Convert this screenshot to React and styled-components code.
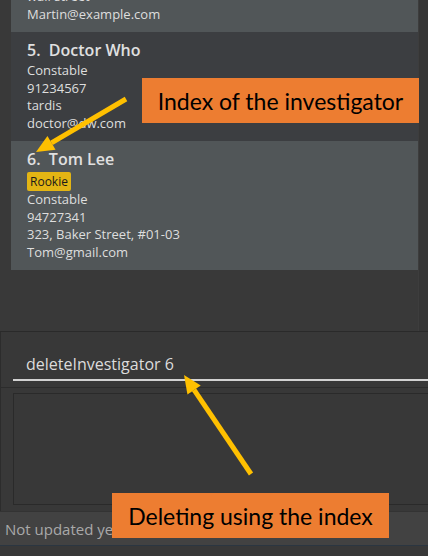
import React from 'react';
import styled, { createGlobalStyle } from 'styled-components';

const GlobalStyle = createGlobalStyle`
  html, body {
    margin: 0;
    padding: 0;
    background: #0b0b0c;
  }
  * {
    box-sizing: border-box;
  }
`;

const Window = styled.div`
  position: relative;
  width: 428px;
  height: 556px;
  overflow: hidden;
  display: flex;
  flex-direction: column;
  background: #383838;
  font-family: 'Open Sans', 'Noto Sans', sans-serif;
`;

const ListPanel = styled.div`
  height: 332px;
  flex: none;
  overflow: hidden;
  display: flex;
  background: #393939;
  border-bottom: 1px solid #2a2a2a;
`;

const ListBody = styled.div`
  flex: 1;
  padding-left: 11px;
`;

// list is scrolled down: the previous card is partly hidden above
const Cards = styled.div`
  margin-top: -77px;
  display: flex;
  flex-direction: column;
`;

const ScrollTrack = styled.div`
  width: 10px;
  flex: none;
  background: #353535;
  border-left: 1px solid #3d3d3d;
`;

const Card = styled.div`
  display: flex;
  flex-direction: column;
  align-items: flex-start;
  padding: 7px 16px 9px 16px;
  background: ${({ $odd }) => ($odd ? '#3c3e41' : '#515658')};
`;

const Title = styled.div`
  font-size: 16px;
  line-height: 23px;
  font-weight: 600;
  color: #e0e0e0;
  white-space: pre;
`;

const Tag = styled.span`
  margin-top: 1px;
  height: 19px;
  padding: 0 3px;
  border-radius: 2px;
  background: #e3b514;
  color: #1a1a1a;
  font-size: 12px;
  line-height: 19px;
`;

const Line = styled.div`
  font-size: 13px;
  line-height: 17.5px;
  color: #dedede;
`;

const CommandBox = styled.div`
  height: 56px;
  flex: none;
  padding: 14px 0 6px 12px;
  border-left: 1px solid #2c2c2c;
  border-bottom: 1px solid #2c2c2c;
  display: flex;
  flex-direction: column;
  justify-content: flex-end;
`;

const CommandText = styled.div`
  padding: 0 0 4px 13px;
  border-bottom: 2px solid #d2d2d2;
  font-size: 16px;
  line-height: 21px;
  color: #dcdcdc;
`;

const ResultPanel = styled.div`
  height: 123px;
  flex: none;
  padding: 5px 0 6px 12px;
  border-left: 1px solid #2c2c2c;
  display: flex;
`;

const ResultBox = styled.div`
  flex: 1;
  margin-right: -4px;
  border: 1px solid #2a2a2a;
  background: #383838;
`;

const StatusBar = styled.div`
  height: 35px;
  flex: none;
  padding-left: 5px;
  display: flex;
  align-items: center;
  background: #424242;
  border-top: 1px solid #333333;
  border-bottom: 1px solid #2b3641;
  color: #a9a9a9;
  font-size: 15px;
`;

const Callout = styled.div`
  position: absolute;
  left: ${({ $x }) => $x}px;
  top: ${({ $y }) => $y}px;
  width: 277px;
  height: 45px;
  display: flex;
  align-items: center;
  justify-content: center;
  background: #ed7d31;
  color: #000;
  font-family: Lato, 'Noto Sans', sans-serif;
  font-size: 23px;
`;

const Overlay = styled.svg`
  position: absolute;
  left: 0;
  top: 0;
  pointer-events: none;
`;

const investigators = [
  {
    id: 4,
    name: 'Martin Lim',
    details: ['Sergeant', '87438807', 'wall street', 'Martin@example.com'],
  },
  {
    id: 5,
    name: 'Doctor Who',
    details: ['Constable', '91234567', 'tardis', 'doctor@dw.com'],
  },
  {
    id: 6,
    name: 'Tom Lee',
    tags: ['Rookie'],
    details: ['Constable', '94727341', '323, Baker Street, #01-03', 'Tom@gmail.com'],
  },
];

const Arrow = ({ x1, y1, x2, y2 }) => {
  const ang = Math.atan2(y2 - y1, x2 - x1);
  const len = 18;
  const half = 8;
  const bx = x2 - len * Math.cos(ang);
  const by = y2 - len * Math.sin(ang);
  const px = -Math.sin(ang) * half;
  const py = Math.cos(ang) * half;
  return (
    <g>
      <line x1={x1} y1={y1} x2={bx} y2={by} stroke="#ffc000" strokeWidth="5" />
      <polygon
        points={`${x2},${y2} ${bx + px},${by + py} ${bx - px},${by - py}`}
        fill="#ffc000"
      />
    </g>
  );
};

export default function App() {
  return (
    <Window>
      <GlobalStyle />
      <ListPanel>
        <ListBody>
          <Cards>
            {investigators.map((p) => (
              <Card key={p.id} $odd={p.id % 2 === 1}>
                <Title>{`${p.id}.  ${p.name}`}</Title>
                {p.tags && p.tags.map((t) => <Tag key={t}>{t}</Tag>)}
                {p.details.map((d) => (
                  <Line key={d}>{d}</Line>
                ))}
              </Card>
            ))}
          </Cards>
        </ListBody>
        <ScrollTrack />
      </ListPanel>
      <CommandBox>
        <CommandText>deleteInvestigator 6</CommandText>
      </CommandBox>
      <ResultPanel>
        <ResultBox />
      </ResultPanel>
      <StatusBar>Not updated yet</StatusBar>

      <Callout $x={142} $y={78}>Index of the investigator</Callout>
      <Callout $x={112} $y={493}>Deleting using the index</Callout>
      <Overlay width="428" height="556">
        <Arrow x1={126} y1={99} x2={36} y2={152} />
        <Arrow x1={251} y1={474} x2={184} y2={375} />
      </Overlay>
    </Window>
  );
}
